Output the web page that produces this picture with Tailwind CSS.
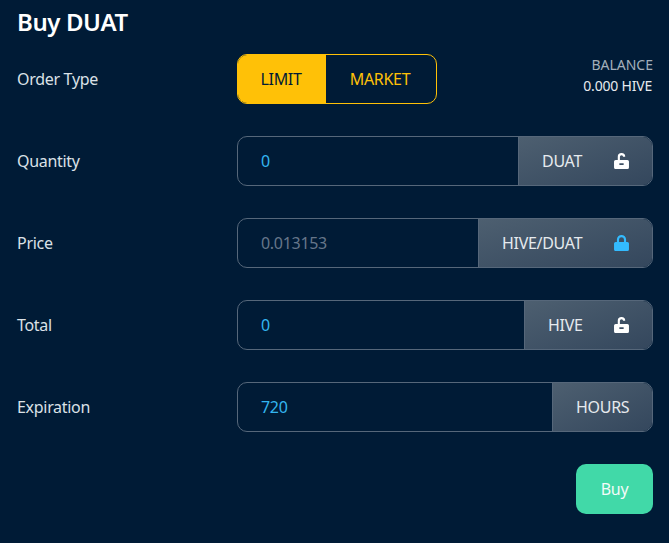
<!DOCTYPE html>
<html lang="en">
<head>
  <meta charset="UTF-8">
  <title>Buy DUAT</title>
  <script src="https://cdn.jsdelivr.net/npm/@tailwindcss/browser@4"></script>
</head>
<body class="bg-[#001b36] font-['Noto_Sans',sans-serif] text-[16px] tracking-[-0.3px] w-[669px] h-[543px] overflow-hidden">
  <div class="pl-[17px] pr-4 flex flex-col">
    <h1 class="h-[46px] text-[24px] leading-[44px] font-semibold tracking-[-0.4px] text-white">Buy DUAT</h1>
    <div class="mt-2 flex flex-col gap-8">

      <!-- Order type -->
      <div class="flex items-center h-[50px]">
        <div class="w-[220px] text-[#dbe1e7]">Order Type</div>
        <div class="flex h-[50px] w-[200px] rounded-[10px] border border-[#ffc107] overflow-hidden">
          <div class="w-[88px] pr-0.5 bg-[#ffc107] text-[#001b36] flex items-center justify-center">LIMIT</div>
          <div class="flex-1 pr-0.5 text-[#ffc107] flex items-center justify-center">MARKET</div>
        </div>
        <div class="ml-auto pb-2 text-right text-[14px] leading-[21px] tracking-normal">
          <div class="text-[#a3afbb]">BALANCE</div>
          <div class="pr-px text-[#e6eaee] tracking-[-0.2px]">0.000 HIVE</div>
        </div>
      </div>

      <!-- Quantity -->
      <div class="flex items-center h-[50px]">
        <div class="w-[220px] text-[#dbe1e7]">Quantity</div>
        <div class="flex flex-1 h-[50px] rounded-[10px] border border-[#56677a] overflow-hidden">
          <div class="flex-1 pl-[23px] flex items-center text-[#33b5f0]">0</div>
          <div class="w-[134px] pl-[23px] border-l border-[#56677a] bg-linear-to-br from-[#4d5f70] to-[#34475d] flex items-center text-[#e6eaee]">
            DUAT
            <svg class="ml-auto mr-[23px] w-[15px] h-[16px]" viewBox="0.5 0.5 14 15" fill="#fff"><path fill-rule="evenodd" d="M4 7V4a3.500 3.500 0 0 1 7 0h-2a1.500 1.500 0 0 0-3 0V7h7a1.500 1.500 0 0 1 1.500 1.500V14A1.500 1.500 0 0 1 13 15.500H2A1.500 1.500 0 0 1 .5 14V8.500A1.500 1.500 0 0 1 2 7zM5.500 10v1.800h4V10z"/></svg>
          </div>
        </div>
      </div>

      <!-- Price -->
      <div class="flex items-center h-[50px]">
        <div class="w-[220px] text-[#dbe1e7]">Price</div>
        <div class="flex flex-1 h-[50px] rounded-[10px] border border-[#56677a] overflow-hidden">
          <div class="flex-1 pl-[23px] flex items-center text-[#66768a]">0.013153</div>
          <div class="w-[174px] pl-[23px] border-l border-[#56677a] bg-linear-to-br from-[#4d5f70] to-[#34475d] flex items-center text-[#e6eaee]">
            HIVE/DUAT
            <svg class="ml-auto mr-[23px] w-[15px] h-[16px]" viewBox="0.5 0.5 14 15" fill="#33bbff"><path fill-rule="evenodd" d="M3.200 7V4.800a4.300 4.300 0 0 1 8.600 0V7H13a1.500 1.500 0 0 1 1.500 1.500V14a1.500 1.500 0 0 1-1.500 1.500H2A1.500 1.500 0 0 1 .5 14V8.500A1.500 1.500 0 0 1 2 7zM5.200 7h4.600V4.800a2.300 2.300 0 0 0-4.600 0z"/></svg>
          </div>
        </div>
      </div>

      <!-- Total -->
      <div class="flex items-center h-[50px]">
        <div class="w-[220px] text-[#dbe1e7]">Total</div>
        <div class="flex flex-1 h-[50px] rounded-[10px] border border-[#56677a] overflow-hidden">
          <div class="flex-1 pl-[23px] flex items-center text-[#33b5f0]">0</div>
          <div class="w-[128px] pl-[23px] border-l border-[#56677a] bg-linear-to-br from-[#4d5f70] to-[#34475d] flex items-center text-[#e6eaee]">
            HIVE
            <svg class="ml-auto mr-[23px] w-[15px] h-[16px]" viewBox="0.5 0.5 14 15" fill="#fff"><path fill-rule="evenodd" d="M4 7V4a3.500 3.500 0 0 1 7 0h-2a1.500 1.500 0 0 0-3 0V7h7a1.500 1.500 0 0 1 1.500 1.500V14A1.500 1.500 0 0 1 13 15.500H2A1.500 1.500 0 0 1 .5 14V8.500A1.500 1.500 0 0 1 2 7zM5.500 10v1.800h4V10z"/></svg>
          </div>
        </div>
      </div>

      <!-- Expiration -->
      <div class="flex items-center h-[50px]">
        <div class="w-[220px] text-[#dbe1e7]">Expiration</div>
        <div class="flex flex-1 h-[50px] rounded-[10px] border border-[#56677a] overflow-hidden">
          <div class="flex-1 pl-[23px] flex items-center text-[#33b5f0]">720</div>
          <div class="w-[100px] pl-[23px] border-l border-[#56677a] bg-linear-to-br from-[#4d5f70] to-[#34475d] flex items-center text-[#e6eaee]">HOURS</div>
        </div>
      </div>

      <div class="flex justify-end">
        <button class="w-[77px] h-[50px] rounded-[10px] bg-[#41d9a8] text-[#f2fbf8]">Buy</button>
      </div>
    </div>
  </div>
</body>
</html>
